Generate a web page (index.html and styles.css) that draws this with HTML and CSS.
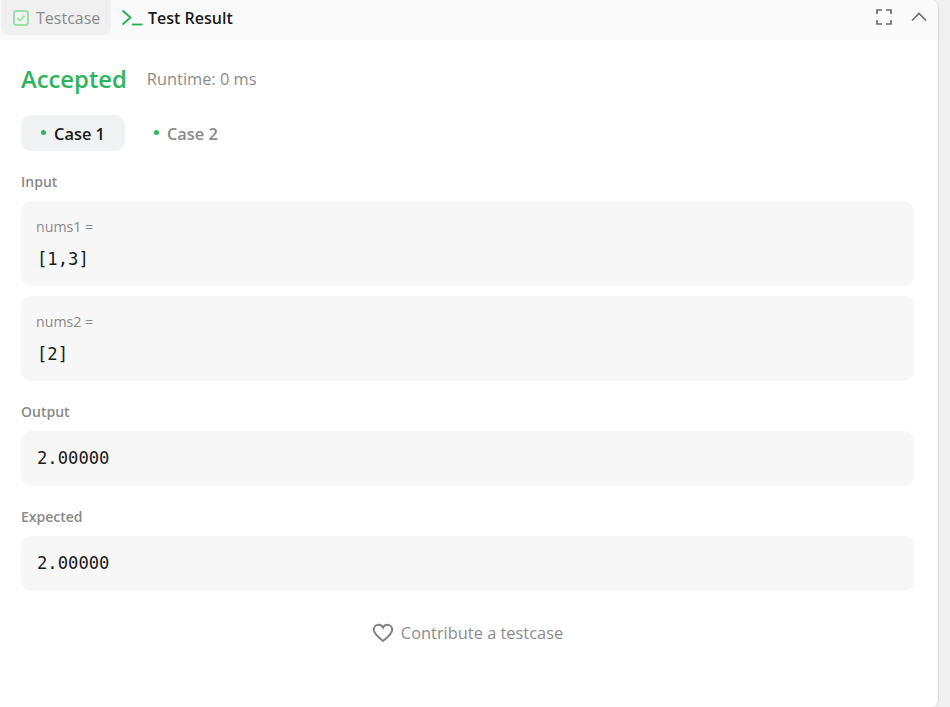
FILE: index.html
```html
<!DOCTYPE html>
<html lang="en">
<head>
    <meta charset="UTF-8">
    <meta name="viewport" content="width=device-width, initial-scale=1.0">
    <title>Test Result</title>
    <link rel="stylesheet" href="styles.css">
</head>
<body>
    <div class="panel">
        <div class="topbar">
            <div class="tab tab-off">
                <svg class="tab-check" width="18" height="18" viewBox="0 0 18 18" fill="none">
                    <rect x="2" y="2" width="14" height="14" rx="2.5" fill="#eef5ef" stroke="#9fdfae" stroke-width="2"/>
                    <path d="M5.5 9.2l2.5 2.4 4.5-4.8" stroke="#9fdfae" stroke-width="1.7"/>
                </svg>
                <span>Testcase</span>
            </div>
            <div class="tab tab-on">
                <svg width="22" height="18" viewBox="0 0 22 18" fill="none">
                    <path d="M1.5 1.5l8 7-8 7" stroke="#1db34f" stroke-width="1.8"/>
                    <path d="M11 15.5h10.5" stroke="#1db34f" stroke-width="1.8"/>
                </svg>
                <span>Test Result</span>
            </div>
            <div class="tools">
                <svg width="16" height="16" viewBox="0 0 16 16" fill="none">
                    <path d="M1 5V1h5M10 1h5v4M15 11v4h-5M6 15H1v-4" stroke="#6b6b6b" stroke-width="1.7"/>
                </svg>
                <svg width="16" height="10" viewBox="0 0 16 10" fill="none">
                    <path d="M1 8.5l7-7 7 7" stroke="#6b6b6b" stroke-width="1.6"/>
                </svg>
            </div>
        </div>

        <div class="content">
            <div class="status">
                <span class="accepted">Accepted</span>
                <span class="runtime">Runtime: 0 ms</span>
            </div>

            <div class="cases">
                <div class="case case-on"><i class="dot"></i>Case 1</div>
                <div class="case"><i class="dot"></i>Case 2</div>
            </div>

            <div class="label">Input</div>
            <div class="box">
                <div class="var">nums1 =</div>
                <div class="val">[1,3]</div>
            </div>
            <div class="box box-next">
                <div class="var">nums2 =</div>
                <div class="val">[2]</div>
            </div>

            <div class="label">Output</div>
            <div class="box box-plain">
                <div class="val">2.00000</div>
            </div>

            <div class="label">Expected</div>
            <div class="box box-plain">
                <div class="val">2.00000</div>
            </div>

            <div class="contribute">
                <svg width="22" height="20" viewBox="0 0 22 20" fill="none">
                    <path d="M11 18C5.5 13.8 1.8 10.6 1.8 6.6 1.8 3.8 4 1.8 6.5 1.8c1.9 0 3.5 1 4.5 2.8 1-1.8 2.6-2.8 4.5-2.8 2.5 0 4.7 2 4.7 4.8 0 4-3.7 7.2-9.2 11.4z" stroke="#808080" stroke-width="2"/>
                </svg>
                <span>Contribute a testcase</span>
            </div>
        </div>
    </div>
</body>
</html>
```

FILE: styles.css
```css
html, body {
    margin: 0;
    height: 100%;
}
body {
    font-family: "Open Sans", "Noto Sans", sans-serif;
    background-color: #f0f0f0;
    overflow: hidden;
}
.panel {
    width: 939px;
    height: 707px;
    box-sizing: border-box;
    background: #fff;
    border-right: 1px solid #d6d6d6;
    border-radius: 0 8px 8px 0;
}
.topbar {
    display: flex;
    align-items: flex-start;
    height: 40px;
    padding-left: 1px;
    background: #fafafa;
    border-radius: 0 8px 0 0;
}
.tab {
    display: flex;
    align-items: center;
    height: 35px;
    font-size: 16px;
}
.tab-off {
    width: 110px;
    box-sizing: border-box;
    padding-left: 11px;
    gap: 6px;
    background: #f0f0f0;
    border-radius: 0 0 8px 8px;
    color: #8a8a8a;
}
.tab-on {
    margin-left: 10px;
    gap: 5px;
    font-weight: 600;
    color: #1a1a1a;
}
.tools {
    display: flex;
    align-items: center;
    gap: 19px;
    height: 34px;
    margin-left: auto;
    padding-right: 11px;
}
.content {
    padding: 0 24px 0 21px;
}
.status {
    display: flex;
    align-items: center;
    gap: 20px;
    padding-top: 21px;
    height: 36px;
}
.accepted {
    font-size: 23.8px;
    font-weight: 600;
    color: #2cb55d;
}
.runtime {
    margin-bottom: 2px;
    font-size: 16.4px;
    color: #8c8c8c;
}
.cases {
    display: flex;
    margin-top: 18px;
}
.case {
    display: flex;
    align-items: center;
    gap: 8px;
    height: 36px;
    padding: 0 20px;
    border-radius: 10px;
    font-size: 16.4px;
    font-weight: 600;
    color: #8a8a8a;
}
.case-on {
    background: #f0f2f4;
    color: #1a1a1a;
}
.case:not(.case-on) {
    padding-left: 29px;
}
.dot {
    width: 5px;
    height: 5px;
    margin-top: -2px;
    border-radius: 50%;
    background: #2cb55d;
}
.label {
    margin-top: 21px;
    height: 19px;
    margin-bottom: 10px;
    font-size: 14px;
    line-height: 19px;
    font-weight: 600;
    color: #8a8a8a;
}
.box {
    height: 85px;
    box-sizing: border-box;
    padding: 16px 16px 0 16px;
    background: #f7f7f7;
    border-radius: 10px;
}
.box-next {
    margin-top: 10px;
}
.box-plain {
    height: 55px;
    padding-top: 15px;
}
.var {
    margin-left: -1px;
    font-size: 14.2px;
    line-height: 19px;
    color: #8a8a8a;
}
.val {
    margin-top: 11px;
    font-family: "DejaVu Sans Mono", monospace;
    font-size: 17.2px;
    line-height: 24px;
    color: #1a1a1a;
}
.box-plain .val {
    margin-top: 0;
}
.contribute {
    display: flex;
    justify-content: center;
    align-items: center;
    gap: 7px;
    margin-top: 30px;
    font-size: 16.4px;
    color: #8c8c8c;
}
```
